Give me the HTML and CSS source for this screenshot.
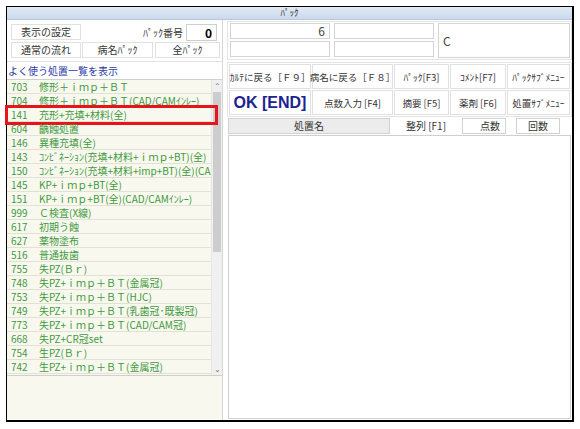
FILE: index.html
```html
<!DOCTYPE html>
<html lang="ja">
<head>
<meta charset="utf-8">
<title>ﾊﾟｯｸ</title>
<link rel="stylesheet" href="styles.css">
</head>
<body>
<div class="window">
  <div class="titlebar">ﾊﾟｯｸ</div>
  <div class="main">
    <div class="left">
      <div class="ctrl">
        <div class="crow">
          <div class="btn b1">表示の設定</div>
          <div class="lbl">ﾊﾟｯｸ番号</div>
          <div class="numbox">0</div>
        </div>
        <div class="crow">
          <div class="btn b1">通常の流れ</div>
          <div class="btn b2">病名ﾊﾟｯｸ</div>
          <div class="btn b3">全ﾊﾟｯｸ</div>
        </div>
      </div>
      <div class="listhead">よく使う処置一覧を表示</div>
      <div class="listwrap">
        <div class="list">
          <div class="row"><span class="code">703</span><span class="name">修形＋ｉｍｐ＋ＢＴ</span></div>
          <div class="row"><span class="code">704</span><span class="name">修形＋ｉｍｐ＋ＢＴ(CAD/CAMｲﾝﾚｰ)</span></div>
          <div class="row sel"><span class="code">141</span><span class="name">充形+充填+材料(全)</span></div>
          <div class="row"><span class="code">604</span><span class="name">齲蝕処置</span></div>
          <div class="row"><span class="code">146</span><span class="name">異種充填(全)</span></div>
          <div class="row"><span class="code">143</span><span class="name">ｺﾝﾋﾞﾈｰｼｮﾝ(充填+材料+ｉｍｐ+BT)(全)</span></div>
          <div class="row"><span class="code">150</span><span class="name">ｺﾝﾋﾞﾈｰｼｮﾝ(充填+材料+imp+BT)(全)(CAD/CAMｲﾝﾚｰ)</span></div>
          <div class="row"><span class="code">145</span><span class="name">KP+ｉｍｐ+BT(全)</span></div>
          <div class="row"><span class="code">151</span><span class="name">KP+ｉｍｐ+BT(全)(CAD/CAMｲﾝﾚｰ)</span></div>
          <div class="row"><span class="code">999</span><span class="name">Ｃ検査(X線)</span></div>
          <div class="row"><span class="code">617</span><span class="name">初期う蝕</span></div>
          <div class="row"><span class="code">627</span><span class="name">薬物塗布</span></div>
          <div class="row"><span class="code">516</span><span class="name">普通抜歯</span></div>
          <div class="row"><span class="code">755</span><span class="name">失PZ(Ｂｒ)</span></div>
          <div class="row"><span class="code">748</span><span class="name">失PZ+ｉｍｐ＋ＢＴ(金属冠)</span></div>
          <div class="row"><span class="code">753</span><span class="name">失PZ+ｉｍｐ＋ＢＴ(HJC)</span></div>
          <div class="row"><span class="code">749</span><span class="name">失PZ+ｉｍｐ＋ＢＴ(乳歯冠･既製冠)</span></div>
          <div class="row"><span class="code">773</span><span class="name">失PZ+ｉｍｐ＋ＢＴ(CAD/CAM冠)</span></div>
          <div class="row"><span class="code">668</span><span class="name">失PZ+CR冠set</span></div>
          <div class="row"><span class="code">754</span><span class="name">生PZ(Ｂｒ)</span></div>
          <div class="row"><span class="code">742</span><span class="name">生PZ+ｉｍｐ＋ＢＴ(金属冠)</span></div>
        </div>
        <div class="scroll">
          <div class="arrow">&#8963;</div>
          <div class="thumb"></div>
          <div class="spacer"></div>
          <div class="arrow">&#8964;</div>
        </div>
      </div>
      <div class="memo"></div>
    </div>
    <div class="right">
      <div class="fields">
        <div class="fcol">
          <div class="field num">6</div>
          <div class="field"></div>
        </div>
        <div class="fcol">
          <div class="field"></div>
          <div class="field"></div>
        </div>
        <div class="field big">C</div>
      </div>
      <div class="btngrid">
        <div class="cell">ｶﾙﾃに戻る［Ｆ９］</div>
        <div class="cell">病名に戻る［Ｆ８］</div>
        <div class="cell">ﾊﾟｯｸ[F3]</div>
        <div class="cell">ｺﾒﾝﾄ[F7]</div>
        <div class="cell">ﾊﾟｯｸｻﾌﾞﾒﾆｭｰ</div>
        <div class="cell ok">OK [END]</div>
        <div class="cell">点数入力 [F4]</div>
        <div class="cell">摘要 [F5]</div>
        <div class="cell">薬剤 [F6]</div>
        <div class="cell">処置ｻﾌﾞﾒﾆｭｰ</div>
      </div>
      <div class="hdr">
        <div class="h-name">処置名</div>
        <div class="h-sort">整列 [F1]</div>
        <div class="h-btn h-pts">点数</div>
        <div class="h-btn h-cnt">回数</div>
      </div>
      <div class="content"></div>
    </div>
  </div>
</div>
</body>
</html>
```

FILE: styles.css
```css
* { box-sizing: border-box; }
html, body { margin: 0; padding: 0; background: #fff; }
body {
  font-family: "Noto Sans CJK JP", "Noto Sans", sans-serif;
  font-size: 10px;
  color: #333;
  padding: 6px 0 0 6px;
}
.window {
  width: 568px;
  height: 416px;
  border-style: solid;
  border-color: #000;
  border-width: 1px 2px 2px 1px;
  background: #fff;
  display: flex;
  flex-direction: column;
}
.titlebar {
  height: 13px;
  background: linear-gradient(#e2ebf6, #c9d9ec);
  border-bottom: 1px solid #b8c8dc;
  font-size: 9px;
  line-height: 12px;
  text-align: center;
  color: #333;
}
.main {
  flex: 1;
  display: flex;
  gap: 2px;
  min-height: 0;
}
.left {
  width: 216px;
  display: flex;
  flex-direction: column;
  border-right: 1px solid #d6d6d6;
}
.ctrl {
  padding: 4px 0 2px 4px;
  display: flex;
  flex-direction: column;
  gap: 2px;
  height: 42px;
  border-bottom: 1px solid #e2e2e2;
}
.crow {
  display: flex;
  align-items: center;
  height: 16px;
}
.btn {
  height: 16px;
  border: 1px solid #e0e0e0;
  background: #fff;
  text-align: center;
  line-height: 14px;
  margin-right: 1px;
}
.b1 { width: 70px; }
.b2 { width: 71px; margin-right: 2px; }
.b3 { width: 65px; }
.lbl {
  width: 104px;
  text-align: right;
  padding-right: 3px;
}
.numbox {
  width: 31px;
  height: 17px;
  border: 1px solid #cfcfcf;
  text-align: right;
  padding-right: 4px;
  font-weight: bold;
  font-size: 12px;
  line-height: 15px;
  color: #000;
}
.listhead {
  height: 18px;
  line-height: 17px;
  padding-left: 1px;
  color: #2b3aa6;
  border-bottom: 1px solid #cfcfcf;
}
.listwrap {
  display: flex;
  height: 296px;
  border-bottom: 1px solid #cfcfcf;
}
.list {
  width: 204px;
  background: #f8f8ee;
  overflow: visible;
}
.row {
  height: 14px;
  line-height: 13px;
  border-bottom: 1px solid #e2e2d4;
  color: #3f9a3f;
  white-space: nowrap;
  overflow: hidden;
  display: flex;
  position: relative;
}
.row.sel { overflow: visible; }
.row.sel .name { overflow: hidden; }
.row.sel::after {
  content: "";
  position: absolute;
  left: -2px;
  right: -7px;
  top: -3px;
  bottom: -4px;
  border: 3px solid #e8141c;
}
.code {
  width: 32px;
  padding-left: 4px;
  flex: none;
}
.name {
  flex: 1;
  overflow: hidden;
  white-space: nowrap;
}
.scroll {
  width: 11px;
  background: #f0f0f0;
  display: flex;
  flex-direction: column;
  align-items: center;
  border-left: 1px solid #e6e6e6;
}
.arrow {
  height: 12px;
  font-size: 8px;
  line-height: 12px;
  color: #777;
}
.thumb {
  width: 8px;
  height: 160px;
  background: #cdcdcd;
}
.spacer { flex: 1; }
.memo {
  flex: 1;
  background: #f8f8ee;
  margin-bottom: 1px;
}
.right {
  flex: 1;
  display: flex;
  flex-direction: column;
  padding: 1px 0 0 2px;
}
.fields {
  display: flex;
  gap: 4px;
  padding: 1px 1px 2px 2px;
  border: 1px solid #e4e4e4;
  height: 39px;
}
.fcol {
  display: flex;
  flex-direction: column;
  gap: 2px;
}
.field {
  width: 100px;
  height: 17px;
  border: 1px solid #d4d4d4;
  background: #fff;
}
.field.num {
  text-align: right;
  padding-right: 4px;
  font-size: 12px;
  line-height: 14px;
  color: #444;
}
.field.big {
  flex: 1;
  height: 35px;
  font-size: 12px;
  line-height: 33px;
  padding-left: 4px;
  color: #444;
}
.btngrid {
  margin-top: 2px;
  border: 1px solid #e4e4e4;
  padding: 1px;
  display: grid;
  grid-template-columns: 82px 81px 55px 56px 1fr;
  grid-template-rows: 25px 25px;
  gap: 1px;
  height: 55px;
}
.cell {
  border: 1px solid #e0e0e0;
  background: #fff;
  display: flex;
  align-items: center;
  justify-content: center;
  white-space: nowrap;
  font-size: 9.5px;
  color: #333;
}
.cell.ok {
  font-size: 16px;
  font-weight: bold;
  color: #1c2390;
  font-family: "Liberation Sans", "Noto Sans", sans-serif;
}
.hdr {
  display: flex;
  align-items: center;
  height: 17px;
  margin-top: 0;
  padding-left: 1px;
}
.h-name {
  width: 162px;
  height: 16px;
  background: #ececec;
  border: 1px solid #d2d2d2;
  text-align: center;
  line-height: 14px;
}
.h-sort {
  width: 72px;
  text-align: center;
}
.h-btn {
  height: 16px;
  border: 1px solid #d2d2d2;
  background: #fff;
  line-height: 14px;
}
.h-pts {
  width: 44px;
  text-align: right;
  padding-right: 5px;
}
.h-cnt {
  width: 44px;
  margin-left: 10px;
  text-align: center;
}
.content {
  flex: 1;
  margin: 1px;
  border: 1px solid #cfcfcf;
  background: #fff;
}
```
